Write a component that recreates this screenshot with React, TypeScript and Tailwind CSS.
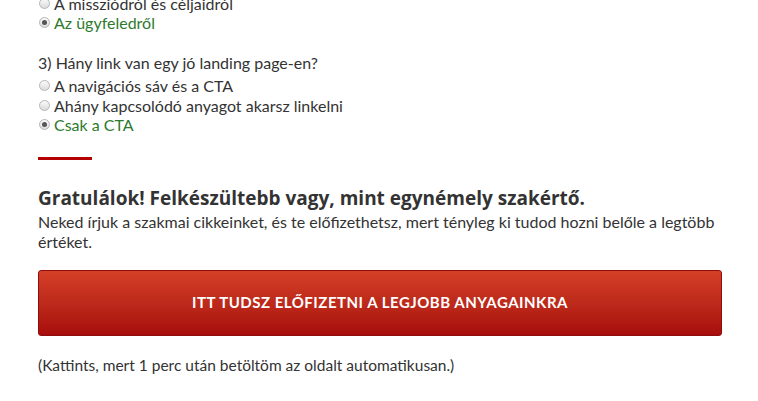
const questions = [
  {
    title: null as string | null,
    options: ["A missziódról és céljaidról", "Az ügyfeledről"],
    selected: 1,
  },
  {
    title: "3) Hány link van egy jó landing page-en?",
    options: ["A navigációs sáv és a CTA", "Ahány kapcsolódó anyagot akarsz linkelni", "Csak a CTA"],
    selected: 2,
  },
];

function Radio({ checked }: { checked: boolean }) {
  return (
    <span className="mr-[4px] inline-flex h-[11px] w-[11px] shrink-0 items-center justify-center rounded-full border border-[#b5b5b5] bg-gradient-to-b from-[#fafafa] to-[#dcdcdc]">
      {checked && <span className="h-[5px] w-[5px] rounded-full bg-[#555]" />}
    </span>
  );
}

export default function App() {
  return (
    <div className="h-[401px] w-[758px] overflow-hidden bg-white pl-[38px] font-['Lato','Open_Sans',sans-serif] text-[#333]">
      <div className="mt-[-6.5px] w-[684px]">
        {questions.map((q, qi) => (
          <div key={qi} className={qi > 0 ? "mt-[19px]" : ""}>
            {q.title && <div className="mb-[2.5px] text-[16px] leading-[22px]">{q.title}</div>}
            {q.options.map((opt, i) => (
              <label key={opt} className="flex items-center pl-[1px] text-[16px] leading-[19.5px]">
                <Radio checked={i === q.selected} />
                <span className={i === q.selected ? "text-[#2d7a2d]" : "text-[#333]"}>{opt}</span>
              </label>
            ))}
          </div>
        ))}

        {/* elválasztó */}
        <div className="mt-[22px] h-[3px] w-[54px] bg-[#b30000]" />

        <h2 className="mt-[26px] font-['Open_Sans',sans-serif] text-[19px] font-bold leading-[24px] text-[#333]">
          Gratulálok! Felkészültebb vagy, mint egynémely szakértő.
        </h2>
        <p className="mt-[2px] text-[16px] leading-[20px]">
          Neked írjuk a szakmai cikkeinket, és te előfizethetsz, mert tényleg ki tudod hozni belőle a legtöbb
          értéket.
        </p>

        <a
          href="#"
          className="mt-[18px] flex h-[66px] w-[684px] items-center justify-center rounded-[3px] border border-[#8f0c0c] bg-gradient-to-b from-[#d43f27] to-[#a70c0c] text-[15px] font-bold uppercase tracking-[0.5px] text-white"
        >
          Itt tudsz előfizetni a legjobb anyagainkra
        </a>

        <p className="mt-[19px] text-[15.5px] leading-[20px]">
          (Kattints, mert 1 perc után betöltöm az oldalt automatikusan.)
        </p>
      </div>
    </div>
  );
}
